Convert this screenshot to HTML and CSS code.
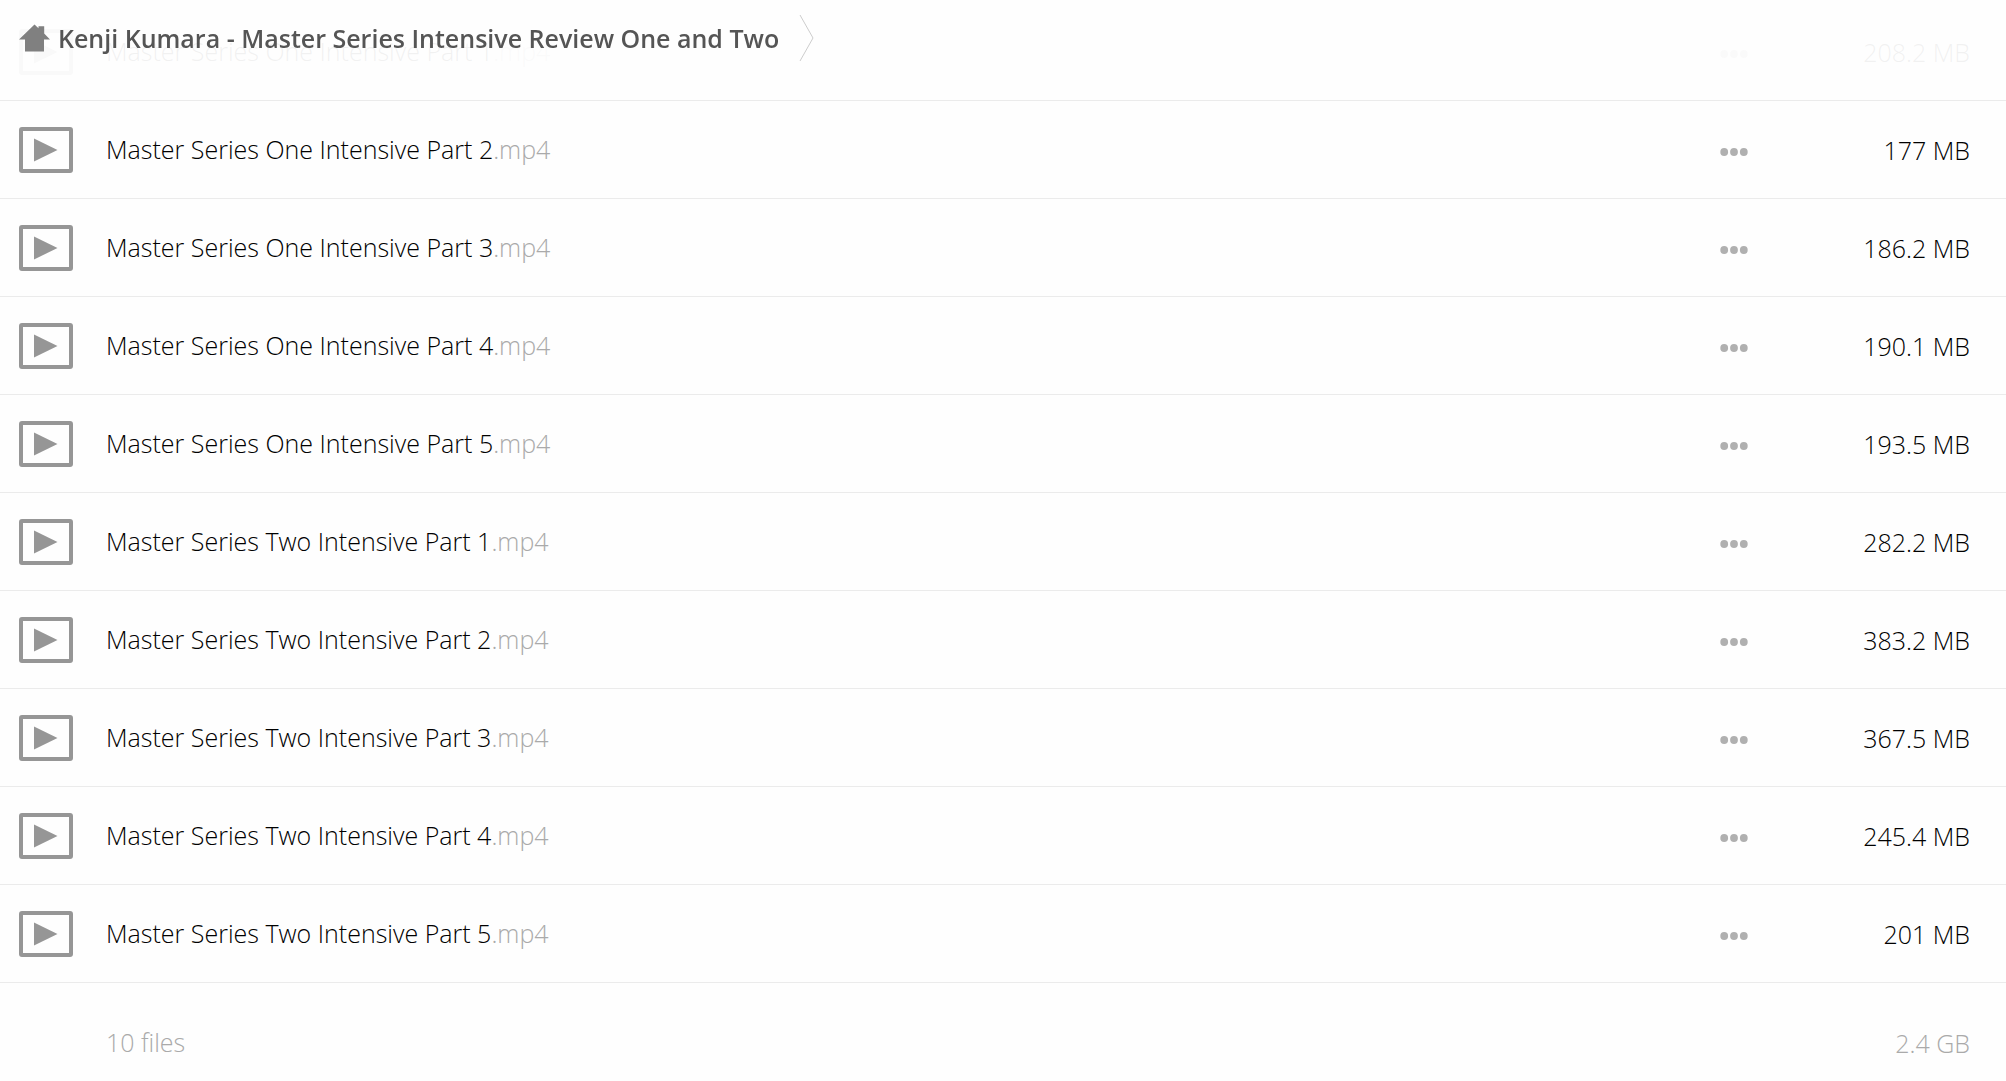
FILE: index.html
```
<!DOCTYPE html>
<html lang="en">
<head>
<meta charset="utf-8">
<meta name="viewport" content="width=device-width, initial-scale=1.0">
<title>Kenji Kumara - Master Series Intensive Review One and Two</title>
<link rel="stylesheet" href="styles.css">
</head>
<body>
<svg class="sprite" aria-hidden="true">
	<symbol id="video" viewBox="0 0 54 46">
		<rect x="2" y="2" width="50" height="42" rx="1" fill="none" stroke="#969696" stroke-width="4"/>
		<path d="M15 11.5v23l23.500-11.500z" fill="#969696"/>
	</symbol>
	<symbol id="dots" viewBox="0 0 28 8">
		<circle cx="4.200" cy="4" r="3.900"/><circle cx="14" cy="4" r="3.900"/><circle cx="23.800" cy="4" r="3.900"/>
	</symbol>
</svg>

<nav class="topbar">
	<a class="crumb" href="#">
		<svg class="home" viewBox="0 0 31 28" aria-hidden="true"><path d="M15.500 0.500l4 3.700V2.200h5.700v7.200L31 15.500h-6V27.500H6V15.500H0z"/></svg>
		<span>Kenji Kumara - Master Series Intensive Review One and Two</span>
	</a>
	<svg class="arrow" viewBox="0 0 15 48" aria-hidden="true"><path d="M1 1l13 23L1 47"/></svg>
</nav>

<table class="files">
	<tbody>
	<tr>
		<td class="icon"><svg><use href="#video"/></svg></td>
		<td class="name"><a href="#">Master Series One Intensive Part 1<span class="ext">.mp4</span></a></td>
		<td class="more"><button type="button" aria-label="More"><svg><use href="#dots"/></svg></button></td>
		<td class="size">208.2 MB</td>
	</tr>
	<tr>
		<td class="icon"><svg><use href="#video"/></svg></td>
		<td class="name"><a href="#">Master Series One Intensive Part 2<span class="ext">.mp4</span></a></td>
		<td class="more"><button type="button" aria-label="More"><svg><use href="#dots"/></svg></button></td>
		<td class="size">177 MB</td>
	</tr>
	<tr>
		<td class="icon"><svg><use href="#video"/></svg></td>
		<td class="name"><a href="#">Master Series One Intensive Part 3<span class="ext">.mp4</span></a></td>
		<td class="more"><button type="button" aria-label="More"><svg><use href="#dots"/></svg></button></td>
		<td class="size">186.2 MB</td>
	</tr>
	<tr>
		<td class="icon"><svg><use href="#video"/></svg></td>
		<td class="name"><a href="#">Master Series One Intensive Part 4<span class="ext">.mp4</span></a></td>
		<td class="more"><button type="button" aria-label="More"><svg><use href="#dots"/></svg></button></td>
		<td class="size">190.1 MB</td>
	</tr>
	<tr>
		<td class="icon"><svg><use href="#video"/></svg></td>
		<td class="name"><a href="#">Master Series One Intensive Part 5<span class="ext">.mp4</span></a></td>
		<td class="more"><button type="button" aria-label="More"><svg><use href="#dots"/></svg></button></td>
		<td class="size">193.5 MB</td>
	</tr>
	<tr>
		<td class="icon"><svg><use href="#video"/></svg></td>
		<td class="name"><a href="#">Master Series Two Intensive Part 1<span class="ext">.mp4</span></a></td>
		<td class="more"><button type="button" aria-label="More"><svg><use href="#dots"/></svg></button></td>
		<td class="size">282.2 MB</td>
	</tr>
	<tr>
		<td class="icon"><svg><use href="#video"/></svg></td>
		<td class="name"><a href="#">Master Series Two Intensive Part 2<span class="ext">.mp4</span></a></td>
		<td class="more"><button type="button" aria-label="More"><svg><use href="#dots"/></svg></button></td>
		<td class="size">383.2 MB</td>
	</tr>
	<tr>
		<td class="icon"><svg><use href="#video"/></svg></td>
		<td class="name"><a href="#">Master Series Two Intensive Part 3<span class="ext">.mp4</span></a></td>
		<td class="more"><button type="button" aria-label="More"><svg><use href="#dots"/></svg></button></td>
		<td class="size">367.5 MB</td>
	</tr>
	<tr>
		<td class="icon"><svg><use href="#video"/></svg></td>
		<td class="name"><a href="#">Master Series Two Intensive Part 4<span class="ext">.mp4</span></a></td>
		<td class="more"><button type="button" aria-label="More"><svg><use href="#dots"/></svg></button></td>
		<td class="size">245.4 MB</td>
	</tr>
	<tr>
		<td class="icon"><svg><use href="#video"/></svg></td>
		<td class="name"><a href="#">Master Series Two Intensive Part 5<span class="ext">.mp4</span></a></td>
		<td class="more"><button type="button" aria-label="More"><svg><use href="#dots"/></svg></button></td>
		<td class="size">201 MB</td>
	</tr>
	</tbody>
	<tfoot>
	<tr>
		<td class="icon"></td>
		<td class="name">10 files</td>
		<td class="more"></td>
		<td class="size">2.4 GB</td>
	</tr>
	</tfoot>
</table>
</body>
</html>
```
FILE: styles.css
```
body{margin:0;background:#fefefe;color:#000;font-family:"Open Sans",sans-serif;font-size:25px;font-weight:300;line-height:34px;}
a{color:inherit;text-decoration:none;}
svg{display:block;}
.sprite{position:absolute;width:0;height:0;}

/* translucent bar, the list scrolls under it */
.topbar{position:fixed;top:0;left:0;right:0;display:flex;align-items:center;gap:20px;height:76px;padding:0 19px;background:rgba(254,254,254,0.95);}
.crumb{display:flex;align-items:center;gap:8px;color:#555;font-weight:600;}
.home{width:31px;height:28px;fill:#808080;}
.arrow{width:15px;height:48px;fill:none;stroke:#ccc;stroke-width:1;}

.files{width:100%;margin-top:3px;border-collapse:separate;border-spacing:0;table-layout:fixed;}
.files td{box-sizing:border-box;height:98px;padding:0;border-bottom:1px solid #ebebeb;vertical-align:middle;}
.files .icon{width:106px;padding-left:19px;}
.icon svg{width:54px;height:46px;}
.files .name{padding-bottom:2px;}
.files .more{width:56px;}
.more button{display:block;margin:0 auto;padding:8px 0 4px;border:0;background:none;cursor:pointer;}
.more svg{width:28px;height:8px;fill:#b0b0b0;}
.files .size{width:244px;padding-right:36px;text-align:right;}
.ext{color:#aaa;}
.files tfoot td{padding-top:22px;padding-bottom:0;border-bottom:0;color:#aaa;}
```
